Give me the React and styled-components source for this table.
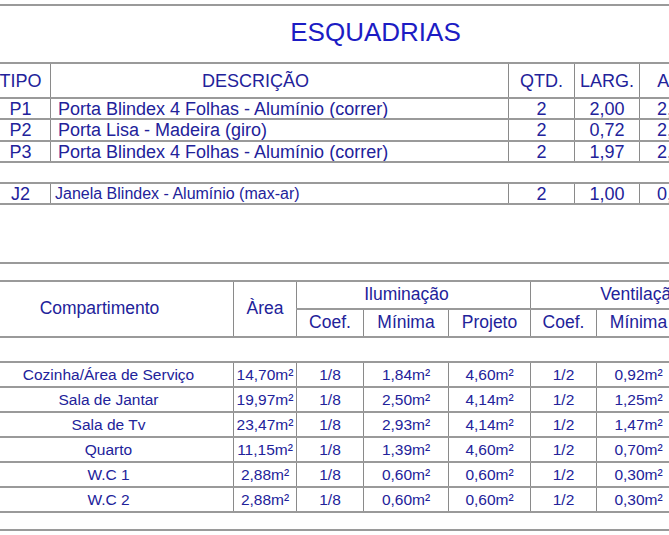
import styled, { createGlobalStyle } from "styled-components";

const GlobalStyle = createGlobalStyle`
  html, body {
    margin: 0;
    padding: 0;
    background: #ffffff;
  }
  body {
    font-family: "Liberation Sans", Arial, sans-serif;
  }
`;

const INK = "#22229a";
const LINE = "#9a9a9a";

const Page = styled.div`
  width: 669px;
  height: 535px;
  overflow: hidden;
  background: #ffffff;
  padding-top: 4px;
  box-sizing: border-box;
`;

const Rule = styled.div`
  height: 2px;
  background: ${LINE};
  margin-top: ${(p) => p.$top || 0}px;
  width: 100%;
`;

const Title = styled.h1`
  margin: 0;
  height: 56px;
  padding-top: 12px;
  box-sizing: border-box;
  padding-left: 82px;
  text-align: center;
  font-size: 26px;
  line-height: 28px;
  font-weight: normal;
  color: #1c1cc4;
`;

const Table = styled.table`
  border-collapse: collapse;
  table-layout: fixed;
  margin-left: ${(p) => p.$shift}px;
  margin-top: ${(p) => p.$top || 0}px;
  color: ${INK};
`;

const Row = styled.tr`
  height: ${(p) => p.$h}px;
`;

const Cell = styled.td`
  padding: 0 0 0 ${(p) => p.$pad || 0}px;
  border-top: 2px solid ${LINE};
  border-bottom: 2px solid ${LINE};
  border-left: 1px solid #8a8a8a;
  border-right: 1px solid #8a8a8a;
  text-align: ${(p) => p.$align || "center"};
  font-size: ${(p) => p.$size || 16}px;
  line-height: 1;
  white-space: nowrap;
  overflow: hidden;
  vertical-align: middle;
`;

const Gap = styled.td`
  padding: 0;
  border-top: 2px solid ${LINE};
  border-bottom: 2px solid ${LINE};
  border-left: none;
  border-right: none;
`;

const HeadText = styled.span`
  display: inline-block;
  transform: translateX(${(p) => p.$dx || 0}px);
`;

const doors = [
  { tipo: "P1", desc: "Porta Blindex 4 Folhas - Alumínio (correr)", qtd: "2", larg: "2,00", alt: "2,10", h: 21 },
  { tipo: "P2", desc: "Porta Lisa - Madeira (giro)", qtd: "2", larg: "0,72", alt: "2,10", h: 22 },
  { tipo: "P3", desc: "Porta Blindex 4 Folhas - Alumínio (correr)", qtd: "2", larg: "1,97", alt: "2,10", h: 21 },
];

const rooms = [
  ["Cozinha/Área de Serviço", "14,70m²", "1/8", "1,84m²", "4,60m²", "1/2", "0,92m²"],
  ["Sala de Jantar", "19,97m²", "1/8", "2,50m²", "4,14m²", "1/2", "1,25m²"],
  ["Sala de Tv", "23,47m²", "1/8", "2,93m²", "4,14m²", "1/2", "1,47m²"],
  ["Quarto", "11,15m²", "1/8", "1,39m²", "4,60m²", "1/2", "0,70m²"],
  ["W.C 1", "2,88m²", "1/8", "0,60m²", "0,60m²", "1/2", "0,30m²"],
  ["W.C 2", "2,88m²", "1/8", "0,60m²", "0,60m²", "1/2", "0,30m²"],
];

const doorCols = [60, 458, 66, 65, 70];
const roomCols = [250, 63, 67, 85, 82, 66, 84, 70];

function Esquadrias() {
  return (
    <Table $shift={-10} style={{ width: doorCols.reduce((a, b) => a + b, 0) }}>
      <colgroup>
        {doorCols.map((w, i) => (
          <col key={i} style={{ width: w }} />
        ))}
      </colgroup>
      <tbody>
        <Row $h={35}>
          <Cell $size={18}>TIPO</Cell>
          <Cell $size={18}>
            <HeadText $dx={-24}>DESCRIÇÃO</HeadText>
          </Cell>
          <Cell $size={18}>QTD.</Cell>
          <Cell $size={18}>LARG.</Cell>
          <Cell $size={18}>ALT.</Cell>
        </Row>
        {doors.map((d) => (
          <Row $h={d.h} key={d.tipo}>
            <Cell $size={18}>{d.tipo}</Cell>
            <Cell $size={18} $align="left" $pad={7}>
              {d.desc}
            </Cell>
            <Cell $size={18}>{d.qtd}</Cell>
            <Cell $size={18}>{d.larg}</Cell>
            <Cell $size={18}>{d.alt}</Cell>
          </Row>
        ))}
        <Row $h={21}>
          <Gap colSpan={5} />
        </Row>
        <Row $h={21}>
          <Cell $size={18}>J2</Cell>
          <Cell $size={16} $align="left" $pad={4}>
            Janela Blindex - Alumínio (max-ar)
          </Cell>
          <Cell $size={18}>2</Cell>
          <Cell $size={18}>1,00</Cell>
          <Cell $size={18}>0,60</Cell>
        </Row>
      </tbody>
    </Table>
  );
}

function Compartimentos() {
  return (
    <Table $shift={-17} $top={16} style={{ width: roomCols.reduce((a, b) => a + b, 0) }}>
      <colgroup>
        {roomCols.map((w, i) => (
          <col key={i} style={{ width: w }} />
        ))}
      </colgroup>
      <tbody>
        <Row $h={28}>
          <Cell $size={17.5} rowSpan={2}>
            <HeadText $dx={-9}>Compartimento</HeadText>
          </Cell>
          <Cell $size={17.5} rowSpan={2}>
            Àrea
          </Cell>
          <Cell $size={17.5} colSpan={3}>
            <HeadText $dx={-7}>Iluminação</HeadText>
          </Cell>
          <Cell $size={17.5} colSpan={3}>
            Ventilação
          </Cell>
        </Row>
        <Row $h={28}>
          <Cell $size={17.5}>Coef.</Cell>
          <Cell $size={17.5}>Mínima</Cell>
          <Cell $size={17.5}>Projeto</Cell>
          <Cell $size={17.5}>Coef.</Cell>
          <Cell $size={17.5}>Mínima</Cell>
          <Cell $size={17.5}>Projeto</Cell>
        </Row>
        <Row $h={25}>
          <Gap colSpan={8} />
        </Row>
        {rooms.map((r) => (
          <Row $h={25} key={r[0]}>
            {r.map((v, i) => (
              <Cell $size={15.5} key={i}>
                {v}
              </Cell>
            ))}
            <Cell $size={15.5}>4,60m²</Cell>
          </Row>
        ))}
        <Row $h={18}>
          <Gap colSpan={8} />
        </Row>
      </tbody>
    </Table>
  );
}

export default function App() {
  return (
    <>
      <GlobalStyle />
      <Page>
        <Rule />
        <Title>ESQUADRIAS</Title>
        <Esquadrias />
        <Rule $top={57} />
        <Compartimentos />
      </Page>
    </>
  );
}
